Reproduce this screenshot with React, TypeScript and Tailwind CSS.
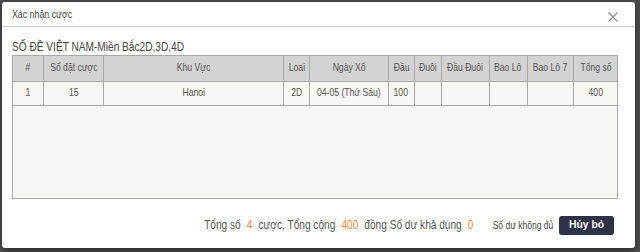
import React from "react";

const cols = [
  { label: "#", w: 31 },
  { label: "Số đặt cược", w: 60 },
  { label: "Khu Vực", w: 181 },
  { label: "Loai", w: 26 },
  { label: "Ngày Xổ", w: 78 },
  { label: "Đầu", w: 26 },
  { label: "Đuôi", w: 27 },
  { label: "Đầu Đuôi", w: 48 },
  { label: "Bao Lô", w: 38 },
  { label: "Bao Lô 7", w: 47 },
  { label: "Tổng số", w: 43 },
];

const row = ["1", "15", "Hanoi", "2D", "04-05 (Thứ Sáu)", "100", "", "", "", "", "400"];

export default function App() {
  return (
    <div
      className="w-[640px] h-[252px] bg-[#4d4d4d] pt-[2px] pl-[2px] overflow-hidden"
      style={{ fontFamily: '"Liberation Sans", Arial, sans-serif' }}
    >
      <div className="w-[633px] h-[246px] bg-white rounded-[3px] shadow-[0_2px_6px_rgba(0,0,0,0.5)] flex flex-col">
        <div className="h-[25px] border-b border-[#cfcfcf] flex items-center justify-between pl-[10px] pr-[17px]">
          <span className="inline-block text-[11px] text-[#444] pt-[1px] whitespace-nowrap origin-left scale-x-[0.8]">
            Xác nhận cược
          </span>
          <svg width="10" height="10" viewBox="0 0 10 10" className="text-[#8a8a8a] mt-[5px]">
            <path d="M0.5 0.5L9.5 9.5M9.5 0.5L0.5 9.5" stroke="currentColor" strokeWidth="1.2" />
          </svg>
        </div>
        <div className="pl-[10px] pt-[11px]">
          <div className="h-[17px] leading-[16px]">
            <span className="inline-block text-[12.5px] text-[#444] whitespace-nowrap origin-left scale-x-[0.81]">
              SỐ ĐỀ VIỆT NAM-Miền Bắc2D,3D,4D
            </span>
          </div>
          <div className="w-[606px] h-[144px] border border-[#a9a9a9] bg-[#f7f6f2]">
            <table className="border-collapse table-fixed text-[10.5px] text-[#555]">
              <colgroup>
                {cols.map((c, i) => (
                  <col key={i} style={{ width: c.w }} />
                ))}
              </colgroup>
              <thead>
                <tr className="h-[25px] bg-[#d3d3d3]">
                  {cols.map((c, i) => (
                    <th
                      key={i}
                      className={`font-normal text-center border-b border-[#a9a9a9] ${i < cols.length - 1 ? "border-r" : ""} px-0 whitespace-nowrap`}
                    >
                      <span className="inline-block scale-x-[0.82]">{c.label}</span>
                    </th>
                  ))}
                </tr>
              </thead>
              <tbody>
                <tr className="h-[24px]">
                  {row.map((v, i) => (
                    <td
                      key={i}
                      className={`text-center border-b border-[#a9a9a9] ${i < row.length - 1 ? "border-r" : ""} px-0 whitespace-nowrap`}
                    >
                      <span className="inline-block scale-x-[0.82]">{v}</span>
                    </td>
                  ))}
                </tr>
              </tbody>
            </table>
          </div>
        </div>
        <div className="flex items-center justify-end pr-[21px] mt-[16px] h-[20px]">
          <span className="inline-block text-[12.5px] text-[#555] whitespace-nowrap origin-right scale-x-[0.81]">
            Tổng số <span className="text-[#f58a3c] mx-[4px]">4</span> cược, Tổng cộng{" "}
            <span className="text-[#f58a3c] mx-[4px]">400</span> đồng Số dư khả dụng{" "}
            <span className="text-[#f58a3c] ml-[4px]">0</span>
          </span>
          <span className="inline-block text-[10px] text-[#444] ml-[8px] whitespace-nowrap origin-right scale-x-[0.85]">
            Số dư không đủ
          </span>
          <button className="ml-[6px] w-[55px] h-[19px] rounded-[3px] bg-[#2f3146] text-white text-[11.5px] font-bold whitespace-nowrap">
            <span className="inline-block scale-x-[0.9]">Hủy bỏ</span>
          </button>
        </div>
      </div>
    </div>
  );
}
